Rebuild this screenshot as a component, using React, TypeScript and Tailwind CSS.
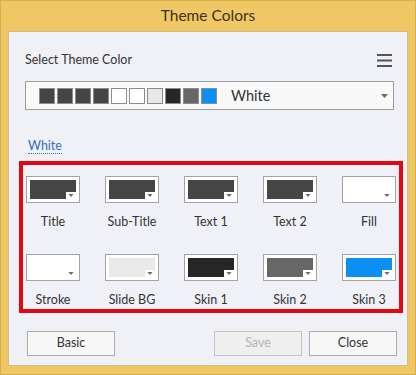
const swatches = [
  "#454545",
  "#454545",
  "#454545",
  "#454545",
  "#ffffff",
  "#ffffff",
  "#e8e8e8",
  "#262626",
  "#676767",
  "#0b90f1",
];

const tiles = [
  { label: "Title", color: "#454545" },
  { label: "Sub-Title", color: "#454545" },
  { label: "Text 1", color: "#454545" },
  { label: "Text 2", color: "#454545" },
  { label: "Fill", color: "#ffffff" },
  { label: "Stroke", color: "#ffffff" },
  { label: "Slide BG", color: "#e9e9e9" },
  { label: "Skin 1", color: "#262626" },
  { label: "Skin 2", color: "#676767" },
  { label: "Skin 3", color: "#0b90f1" },
];

const Arrow = ({ className }: { className?: string }) => (
  <svg viewBox="0 0 7 4" className={className}>
    <path d="M0 0h7L3.5 4z" fill="#6b6b6b" />
  </svg>
);

const ColorTile = ({ label, color }: { label: string; color: string }) => (
  <div className="flex flex-col items-center">
    <div className="box-border h-[27px] w-[54px] border border-[#a3a3a3] bg-white p-[3px]">
      <div className="relative h-full w-full" style={{ backgroundColor: color }}>
        <div className="absolute right-0 bottom-0 flex h-[7px] w-[10px] items-center justify-center bg-white">
          <Arrow className="h-[3px] w-[6px]" />
        </div>
      </div>
    </div>
    <span className="mt-[11px] h-4 text-[12.5px] leading-4 text-[#333]">{label}</span>
  </div>
);

export default function App() {
  return (
    <div
      className="box-border flex h-[375px] w-[416px] flex-col border border-[#d9ae4c] bg-[#efc865]"
      style={{ fontFamily: '"Segoe UI", Lato, "Noto Sans", sans-serif' }}
    >
      <div className="flex h-[30px] items-center justify-center text-[15.5px] text-[#3a3320]">
        Theme Colors
      </div>

      <div className="mx-[7px] box-border flex h-[335px] flex-col border border-[#d2bd84] bg-[#f0f1f6]">
        <div className="mt-[20px] flex items-center justify-between pr-[15px] pl-[16px]">
          <span className="text-[12.5px] leading-4 text-[#333]">Select Theme Color</span>
          <svg viewBox="0 0 15 13" className="h-[13px] w-[15px]">
            <rect x="0" y="0" width="15" height="2" fill="#555" />
            <rect x="0" y="5.5" width="15" height="2" fill="#555" />
            <rect x="0" y="11" width="15" height="2" fill="#555" />
          </svg>
        </div>

        <div className="mt-[13px] ml-[16px] box-border flex h-[29px] w-[369px] items-center border border-[#9d9d9d] bg-[#f9f9f9] pr-[5px] pl-[13px]">
          <div className="flex gap-[2px]">
            {swatches.map((c, i) => (
              <div
                key={i}
                className="box-border h-4 w-4 border border-[#8c8c8c]"
                style={{ backgroundColor: c }}
              />
            ))}
          </div>
          <span className="ml-[14px] text-[14.5px] text-[#333]">White</span>
          <Arrow className="ml-auto h-[4px] w-[7px]" />
        </div>

        <div className="mt-[28px] ml-[19px] h-4 text-[12.5px] leading-4">
          <span className="border-b border-dotted border-[#2f6fc0] text-[#2f6fc0]">White</span>
        </div>

        <div className="mt-[7px] ml-[10px] box-border grid h-[152px] w-[384px] grid-cols-[repeat(5,54px)] gap-x-[25px] gap-y-[22px] border-4 border-[#e30613] pt-[11px] pl-[3px]">
          {tiles.map((t) => (
            <ColorTile key={t.label} label={t.label} color={t.color} />
          ))}
        </div>

        <div className="mt-[18px] flex pr-[10px] pl-[18px]">
          <button className="box-border h-[25px] w-[88px] border border-[#acacac] bg-[#f7f7f7] text-[12.5px] text-[#333]">
            Basic
          </button>
          <button
            disabled
            className="ml-auto box-border h-[25px] w-[88px] border border-[#c4c4c4] bg-[#efefef] text-[12.5px] text-[#b3b3b3]"
          >
            Save
          </button>
          <button className="ml-[7px] box-border h-[25px] w-[88px] border border-[#acacac] bg-[#f7f7f7] text-[12.5px] text-[#333]">
            Close
          </button>
        </div>
      </div>
    </div>
  );
}
